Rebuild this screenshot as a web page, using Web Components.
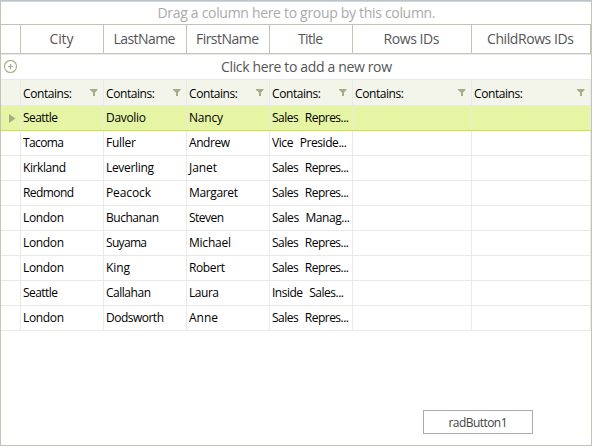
<!DOCTYPE html>
<html lang="en"><head><meta charset="utf-8"><title>Grid</title>
<style>
html,body{margin:0;height:100%;background:#fff}
body{font-family:"Open Sans","Noto Sans",sans-serif;overflow:hidden}
</style></head><body>
<rad-form></rad-form>
<script>
// Text that spreads its letters over a given width.
class FitText extends HTMLElement{
  connectedCallback(){
    const r=this.attachShadow({mode:'open'});
    r.innerHTML='<style>:host{display:inline-block;white-space:nowrap}span{display:inline-block;word-spacing:var(--gap,0)}</style><span></span>';
    const s=r.querySelector('span'),t=this.getAttribute('text'),w=+this.getAttribute('w');
    s.textContent=t;
    if(w){
      const d=(w-s.getBoundingClientRect().width)/(t.length-1);
      s.style.letterSpacing=d+'px';
      s.style.marginRight=-d+'px';
    }
  }
}
customElements.define('fit-text',FitText);

class FilterIcon extends HTMLElement{
  connectedCallback(){
    this.attachShadow({mode:'open'}).innerHTML='<style>:host{display:block;width:8px;height:7px}svg{display:block}</style><svg width="8" height="7"><path d="M0 0h7.5v1L5 3.5V7H3V3.5L0 1z" fill="#a6ad84"/></svg>';
  }
}
customElements.define('filter-icon',FilterIcon);

class GridCell extends HTMLElement{
  connectedCallback(){
    this.attachShadow({mode:'open'}).innerHTML=`<style>
    :host{display:flex;align-items:center;box-sizing:border-box;min-width:0;border-right:1px solid #e9e9e9;padding-left:2px;font-size:12px;line-height:16px;color:#000;white-space:nowrap}
    :host([kind=head]){border-color:#c3c4b5;justify-content:center;padding:0 1px 1px 0;font-size:14px;line-height:20px;color:#555}
    :host([kind=filter]){justify-content:space-between;padding-right:5px;padding-top:2px}
    :host([kind=filter]) ::slotted(filter-icon){margin-bottom:3px}
    :host([kind=mark]){padding:0 0 0 8px}
    </style><slot></slot>`;
  }
}
customElements.define('grid-cell',GridCell);

class GridRow extends HTMLElement{
  connectedCallback(){
    this.attachShadow({mode:'open'}).innerHTML=`<style>
    :host{display:grid;grid-template-columns:20px repeat(4,83px) 119px 119px;box-sizing:border-box;height:25px;border-bottom:1px solid #e9e9e9}
    :host([kind=head]){height:29px;border-color:#c3c4b5}
    :host([kind=filter]){height:26px;background:#f3f5eb}
    :host([kind=current]){background:#e6f5a4;border-color:#cbe72f}
    </style><slot></slot>`;
  }
}
customElements.define('grid-row',GridRow);

class GridBar extends HTMLElement{
  connectedCallback(){
    this.attachShadow({mode:'open'}).innerHTML=`<style>
    :host{display:grid;grid-template-columns:20px 1fr 20px;align-items:center;justify-items:center;box-sizing:border-box;font-size:14px;line-height:20px}
    :host([kind=group]){height:23px;border-bottom:1px solid #c3c4b5;color:#aaa}
    :host([kind=new]){grid-template-columns:20px 1fr;height:26px;border-top:1px solid #e9e9e9;border-bottom:1px solid #e9e9e9;color:#555}
    .t{grid-column:2;margin-left:1px}
    ::slotted(svg){margin-right:2px}
    </style><slot name="icon"></slot><div class="t"><slot></slot></div>`;
  }
}
customElements.define('grid-bar',GridBar);

class RadButton extends HTMLElement{
  connectedCallback(){
    this.attachShadow({mode:'open'}).innerHTML=`<style>
    :host{display:block}button{display:flex;align-items:center;justify-content:center;width:110px;height:24px;box-sizing:border-box;padding:2px 0 0;border:1px solid #ababab;background:#fff;color:#444;font:12px/16px "Open Sans","Noto Sans",sans-serif}
    </style><button><slot></slot></button>`;
  }
}
customElements.define('rad-button',RadButton);

const heads=[['City',24],['LastName',62],['FirstName',63],['Title',25],['Rows IDs',56],['ChildRows IDs',87]];
const rows=[
 [['Seattle',35],['Davolio',40],['Nancy',34],['Sales Repres...',77]],
 [['Tacoma',41],['Fuller',30],['Andrew',41],['Vice Preside...',75]],
 [['Kirkland',43],['Leverling',48],['Janet',28],['Sales Repres...',77]],
 [['Redmond',51],['Peacock',45],['Margaret',49],['Sales Repres...',77]],
 [['London',41],['Buchanan',53],['Steven',35],['Sales Manag...',78]],
 [['London',41],['Suyama',41],['Michael',42],['Sales Repres...',77]],
 [['London',41],['King',24],['Robert',36],['Sales Repres...',77]],
 [['Seattle',35],['Callahan',45],['Laura',30],['Inside Sales...',72]],
 [['London',41],['Dodsworth',58],['Anne',29],['Sales Repres...',77]]];
const ft=([t,w])=>`<fit-text text="${t}" w="${w}"></fit-text>`;
class RadForm extends HTMLElement{
  connectedCallback(){
    this.attachShadow({mode:'open'}).innerHTML=`<style>
    :host{display:flex;flex-direction:column;box-sizing:border-box;width:592px;height:446px;border:1px solid #c3c4b5;background:#fff}
    .edge{height:1px;flex:none;background:#c6d6ee}
    grid-row,grid-bar{flex:none}
    .title{--gap:4px}
    rad-button{margin:79px 0 0 422px}
    svg{display:block}
    </style>
    <div class="edge"></div>
    <grid-bar kind="group">${ft(['Drag a column here to group by this column.',278])}</grid-bar>
    <grid-row kind="head"><grid-cell kind="head"></grid-cell>${heads.map(h=>`<grid-cell kind="head">${ft(h)}</grid-cell>`).join('')}</grid-row>
    <grid-bar kind="new"><svg slot="icon" width="13" height="14" fill="none" stroke="#a6ad84"><circle cx="6.5" cy="6.5" r="6" stroke-width="1.1"/><path d="M4 6.5h5M6.5 4v5" stroke-width="1.2"/></svg>${ft(['Click here to add a new row',171])}</grid-bar>
    <grid-row kind="filter"><grid-cell></grid-cell>${heads.map(()=>`<grid-cell kind="filter">${ft(['Contains:',49])}<filter-icon></filter-icon></grid-cell>`).join('')}</grid-row>
    ${rows.map((r,i)=>`<grid-row${i?'':' kind="current"'}><grid-cell kind="mark">${i?'':'<svg width="7" height="9"><path d="M0 0l6.5 4.5L0 9z" fill="#a6ad84"/></svg>'}</grid-cell>${r.map((c,j)=>`<grid-cell${j==3?' class="title"':''}>${ft(c)}</grid-cell>`).join('')}<grid-cell></grid-cell><grid-cell></grid-cell></grid-row>`).join('')}
    <rad-button>${ft(['radButton1',59])}</rad-button>`;
  }
}
customElements.define('rad-form',RadForm);
</script></body></html>
